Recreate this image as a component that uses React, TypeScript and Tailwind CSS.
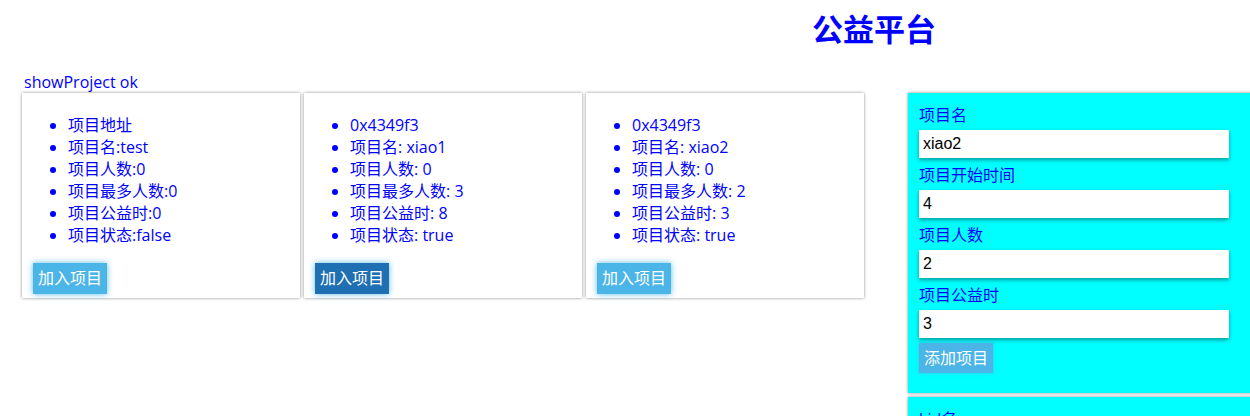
import { useState } from "react"

interface Project {
  addr: string
  name: string
  count: string
  max: string
  hours: string
  status: string
  sep: string
}

const projects: Project[] = [
  { addr: "项目地址", name: "test", count: "0", max: "0", hours: "0", status: "false", sep: ":" },
  { addr: "0x4349f3", name: "xiao1", count: "0", max: "3", hours: "8", status: "true", sep: ": " },
  { addr: "0x4349f3", name: "xiao2", count: "0", max: "2", hours: "3", status: "true", sep: ": " },
]

const fields = [
  { label: "项目名", value: "xiao2" },
  { label: "项目开始时间", value: "4" },
  { label: "项目人数", value: "2" },
  { label: "项目公益时", value: "3" },
]

export default function App() {
  const [active] = useState(1)

  return (
    <div className="h-[416px] overflow-hidden bg-white text-[16px] text-[#0000ff] font-['Open_Sans','Noto_Sans_CJK_SC',sans-serif]">
      <h1 className="h-[73px] pl-[812px] pt-[11px] text-[31px] leading-[37px] font-bold">公益平台</h1>

      <div className="flex">
        <div className="w-[886px] shrink-0 pl-[22px]">
          <div className="pl-[2px] leading-[20px] h-[20px] -mt-[1px] mb-[1px]">showProject ok</div>
          <div className="flex gap-[4px]">
            {projects.map((p, i) => (
              <div
                key={i}
                className="w-[278px] h-[205px] bg-white shadow-[0_0_3px_rgba(0,0,0,0.45)] pt-[21px] pl-[11px]"
              >
                <ul className="list-disc pl-[35px] leading-[22px]">
                  <li>{p.addr}</li>
                  <li>项目名{p.sep}{p.name}</li>
                  <li>项目人数{p.sep}{p.count}</li>
                  <li>项目最多人数{p.sep}{p.max}</li>
                  <li>项目公益时{p.sep}{p.hours}</li>
                  <li>项目状态{p.sep}{p.status}</li>
                </ul>
                <button
                  className={`mt-[17px] h-[31px] px-[5px] leading-[21px] text-white shadow-[0_0_6px_rgba(77,182,232,0.9)] ${
                    i === active ? "bg-[#1f6fb3]" : "bg-[#4cb5e7]"
                  }`}
                >
                  加入项目
                </button>
              </div>
            ))}
          </div>
        </div>

        <div className="w-[22px] shrink-0" />

        <div className="w-[360px] shrink-0 pt-[20px] flex flex-col gap-[4px]">
          <div className="h-[300px] bg-[#00ffff] shadow-[0_0_3px_rgba(0,0,0,0.45)] pt-[11px] pl-[11px]">
            {fields.map((f) => (
              <div key={f.label} className="mb-[6px]">
                <div className="leading-[22px] mb-[4px]">{f.label}</div>
                <input
                  readOnly
                  value={f.value}
                  className="block w-[310px] h-[28px] bg-white pl-[4px] text-black text-[16px] font-['Liberation_Sans',sans-serif] shadow-[0_2px_4px_rgba(0,0,0,0.4)] outline-none"
                />
              </div>
            ))}
            <button className="-mt-[1px] h-[30px] px-[5px] leading-[21px] text-white bg-[#4cb5e7] shadow-[0_0_4px_rgba(77,182,232,0.8)]">
              添加项目
            </button>
          </div>
          <div className="h-[120px] bg-[#00ffff] shadow-[0_0_3px_rgba(0,0,0,0.45)] pt-[11px] pl-[11px]">
            <div className="leading-[22px]">kid名</div>
          </div>
        </div>
      </div>
    </div>
  )
}
